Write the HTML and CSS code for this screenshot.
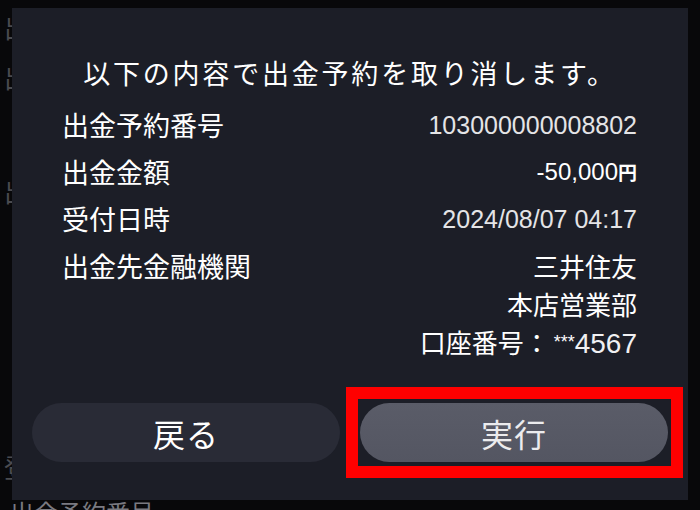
FILE: index.html
```html
<!DOCTYPE html>
<html lang="ja">
<head>
<meta charset="utf-8">
<title>出金予約取消</title>
<link rel="stylesheet" href="styles.css">
</head>
<body>
<div class="screen">
  <div class="backdrop">
    <p class="bg-line bg-1">出金予約</p>
    <p class="bg-line bg-2">出認</p>
    <p class="bg-line bg-3">出金</p>
    <p class="bg-line bg-4">登録</p>
    <p class="bg-line bg-5">出金予約番号</p>
  </div>
  <div class="modal">
    <h1 class="title">以下の内容で出金予約を取り消します。</h1>
    <dl class="details">
      <div class="row">
        <dt>出金予約番号</dt>
        <dd class="num">103000000008802</dd>
      </div>
      <div class="row">
        <dt>出金金額</dt>
        <dd class="amount">-50,000<span class="yen">円</span></dd>
      </div>
      <div class="row">
        <dt>受付日時</dt>
        <dd class="num">2024/08/07 04:17</dd>
      </div>
      <div class="row">
        <dt>出金先金融機関</dt>
        <dd class="bank">
          <span>三井住友</span>
          <span>本店営業部</span>
          <span>口座番号：<span class="ast">***</span><span class="acct">4567</span></span>
        </dd>
      </div>
    </dl>
    <div class="actions">
      <button class="btn btn-back">戻る</button>
      <div class="exec-wrap">
        <button class="btn btn-exec">実行</button>
        <span class="highlight"></span>
      </div>
    </div>
  </div>
</div>
</body>
</html>
```

FILE: styles.css
```css
* { box-sizing: border-box; }
html, body {
  margin: 0;
  padding: 0;
  background: #08080a;
}
.screen {
  position: relative;
  width: 700px;
  height: 510px;
  overflow: hidden;
  background: #08080a;
  font-family: "Noto Sans CJK JP", "Liberation Sans", sans-serif;
  color: #ffffff;
}
.backdrop {
  position: absolute;
  inset: 0;
}
.bg-line {
  position: absolute;
  margin: 0;
  left: 4px;
  font-size: 26px;
  line-height: 30px;
  color: #4a4b50;
  white-space: nowrap;
}
.bg-1 { top: 12px; }
.bg-2 { top: 62px; }
.bg-3 { top: 176px; }
.bg-4 { top: 452px; }
.bg-5 { top: 500px; left: 10px; font-size: 24px; line-height: 24px; color: #7a7a80; }

.modal {
  position: absolute;
  left: 12px;
  top: 8px;
  width: 676px;
  height: 492px;
  background: #1c1e27;
  display: flex;
  flex-direction: column;
  padding: 45px 0 38px 0;
}
.title {
  margin: 0 0 13px 0;
  text-align: center;
  font-size: 27px;
  font-weight: 400;
  letter-spacing: 2.8px;
  line-height: 40px;
}
.details {
  margin: 0;
  padding: 0 51px 0 50px;
  display: flex;
  flex-direction: column;
  gap: 9px;
}
.row {
  display: flex;
  justify-content: space-between;
  align-items: flex-start;
}
.row dt {
  font-size: 27px;
  line-height: 38px;
}
.row dd {
  margin: 0;
  text-align: right;
  line-height: 38px;
}
.num {
  font-family: "Liberation Sans", "Noto Sans CJK JP", sans-serif;
  font-size: 25px;
  color: #e4e4e6;
}
.amount {
  font-family: "Liberation Sans", "Noto Sans CJK JP", sans-serif;
  font-size: 24px;
  color: #ffffff;
}
.yen {
  font-family: "Noto Sans CJK JP", sans-serif;
  font-size: 19px;
  font-weight: 700;
}
.bank {
  display: flex;
  flex-direction: column;
  align-items: flex-end;
  font-family: "Noto Sans CJK JP", sans-serif;
  font-size: 26px;
}
.ast {
  font-family: "Liberation Sans", sans-serif;
  font-size: 18px;
  vertical-align: 5px;
  margin-left: 4px;
}
.acct {
  font-family: "Liberation Sans", sans-serif;
  font-size: 28px;
  color: #f0f0f2;
}
.actions {
  margin-top: auto;
  display: flex;
  gap: 20px;
  padding: 0 20px;
}
.btn {
  flex: 1;
  height: 59px;
  border: none;
  border-radius: 30px;
  font-family: "Noto Sans CJK JP", sans-serif;
  font-size: 32px;
  color: #ffffff;
  padding: 0;
  letter-spacing: 1px;
}
.btn-back {
  background: #292b36;
}
.exec-wrap {
  flex: 1;
  position: relative;
  display: flex;
}
.btn-exec {
  background: linear-gradient(#5a5c68, #545662);
  color: #ececee;
}
.highlight {
  position: absolute;
  left: -14px;
  right: -15px;
  top: -16px;
  bottom: -16px;
  border: 12px solid #ff0000;
  pointer-events: none;
}
```
